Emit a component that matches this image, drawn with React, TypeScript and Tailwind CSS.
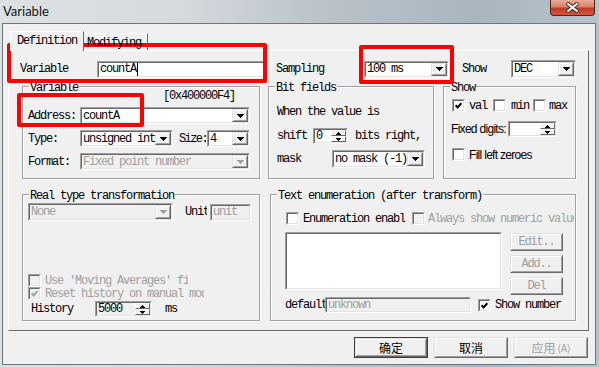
import React from "react";

type P = { className?: string; inner?: string; children?: React.ReactNode };

const mono = "font-['Liberation_Mono',monospace] text-[12px] leading-[12px] tracking-[-1.2px]";
const sans = "font-['Liberation_Sans',sans-serif] text-[12px] tracking-[-0.7px]";
const cjk = "font-['Noto_Sans_CJK_SC',sans-serif] text-[12px] tracking-normal";

function Sunken({ className = "", inner = "", children }: P) {
  return (
    <div className={`border border-t-[#a0a0a0] border-l-[#a0a0a0] border-r-white border-b-white ${className}`}>
      <div className={`h-full w-full border border-t-[#696969] border-l-[#696969] border-r-[#e3e3e3] border-b-[#e3e3e3] ${inner}`}>
        {children}
      </div>
    </div>
  );
}

function Raised({ className = "", inner = "", children }: P) {
  return (
    <div className={`border border-t-[#e3e3e3] border-l-[#e3e3e3] border-r-[#696969] border-b-[#696969] ${className}`}>
      <div className={`h-full w-full flex items-center justify-center border border-t-white border-l-white border-r-[#a0a0a0] border-b-[#a0a0a0] bg-[#f0f0f0] ${inner}`}>
        {children}
      </div>
    </div>
  );
}

function Arrow({ color = "#000" }: { color?: string }) {
  return (
    <svg width="7" height="4" viewBox="0 0 7 4" shapeRendering="crispEdges" className="block">
      <path d="M0 0h7v1H6v1H5v1H4v1H3V3H2V2H1V1H0z" fill={color} />
    </svg>
  );
}

function Tri({ up }: { up?: boolean }) {
  return (
    <svg width="5" height="3" viewBox="0 0 5 3" shapeRendering="crispEdges" className="block">
      <path d={up ? "M2 0h1v1h1v1h1v1H0V2h1V1h1z" : "M0 0h5v1H4v1H3v1H2V2H1V1H0z"} fill="#000" />
    </svg>
  );
}

function Combo({ w, h = "h-[18px]", text, disabled }: { w: string; h?: string; text: string; disabled?: boolean }) {
  return (
    <Sunken className={`${w} ${h} shrink-0`} inner={`flex ${disabled ? "bg-[#f0f0f0]" : "bg-white"}`}>
      <span className={`flex-1 min-w-0 self-center overflow-hidden whitespace-nowrap pl-[1px] ${disabled ? "text-[#a0a0a0]" : "text-black"}`}>
        {text}
      </span>
      <Raised className="w-[16px] h-full shrink-0">
        <Arrow color={disabled ? "#a0a0a0" : "#000"} />
      </Raised>
    </Sunken>
  );
}

function Spin({ w, text = "", grey }: { w: string; text?: string; grey?: boolean }) {
  return (
    <Sunken className={`${w} h-[16px] shrink-0`} inner={`flex ${grey ? "bg-[#f0f0f0]" : "bg-white"}`}>
      <span className="flex-1 min-w-0 self-center overflow-hidden whitespace-nowrap pl-[1px]">{text}</span>
      <div className="w-[15px] h-full flex flex-col shrink-0">
        <div className="flex-1 flex items-center justify-center border border-t-white border-l-white border-r-[#696969] border-b-[#696969] bg-[#f0f0f0]">
          <Tri up />
        </div>
        <div className="flex-1 flex items-center justify-center border border-t-white border-l-white border-r-[#696969] border-b-[#696969] bg-[#f0f0f0]">
          <Tri />
        </div>
      </div>
    </Sunken>
  );
}

function Check({ checked, disabled }: { checked?: boolean; disabled?: boolean }) {
  return (
    <Sunken
      className="w-[13px] h-[13px] shrink-0"
      inner={`flex items-center justify-center ${disabled ? "bg-[#f0f0f0]" : "bg-white"}`}
    >
      {checked && (
        <svg width="7" height="7" viewBox="0 0 7 7" className="block">
          <polyline points="0.6,3.2 2.6,5.4 6.4,1.2" fill="none" stroke={disabled ? "#a0a0a0" : "#000"} strokeWidth="2" />
        </svg>
      )}
    </Sunken>
  );
}

function Group({ title, className = "", children }: { title: string; className?: string; children?: React.ReactNode }) {
  return (
    <fieldset
      className={`min-w-0 shrink-0 border border-[#a0a0a0] shadow-[inset_1px_1px_0_#fff,1px_1px_0_#fff] ${className}`}
    >
      <legend className="ml-[6px] px-[1px] leading-[10px] bg-[#f0f0f0]">
        <span className="relative top-[2px]">{title}</span>
      </legend>
      {children}
    </fieldset>
  );
}

function Btn({ children, disabled, def }: { children: React.ReactNode; disabled?: boolean; def?: boolean }) {
  return (
    <div className={`w-[74px] h-[21px] ${def ? "border border-[#3c3c3c]" : ""}`}>
      <Raised className="w-full h-full" inner={`${cjk} ${disabled ? "text-[#a0a0a0]" : "text-black"}`}>
        {children}
      </Raised>
    </div>
  );
}

function SmallBtn({ children }: { children: React.ReactNode }) {
  return (
    <Raised className="w-[53px] h-[18px]" inner="text-[#a0a0a0]">
      {children}
    </Raised>
  );
}

export default function App() {
  return (
    <div
      className={`relative w-[599px] h-[367px] overflow-hidden flex flex-col bg-[linear-gradient(90deg,#dde1e4_0%,#d5dade_30%,#b9c2c9_55%,#a9b5be_80%,#b6c4cc_100%)] ${mono}`}
    >
      {/* title bar */}
      <div className="h-[23px] shrink-0 flex items-start">
        <span className="ml-[3px] mt-[3px] font-['Lato',sans-serif] text-[13px] leading-[16px] tracking-normal text-[#141414]">
          Variable
        </span>
        <div className="ml-auto mr-[4px] w-[45px] h-[16px] rounded-b-[4px] border border-t-0 border-[#5a2016] bg-[linear-gradient(180deg,#e8aa9b_0%,#d9826c_45%,#c33a22_55%,#d4573d_100%)] flex items-center justify-center">
          <svg width="13" height="11" viewBox="0 0 13 11" className="block">
            <path d="M1 1L12 10M12 1L1 10" stroke="#3d2a28" strokeWidth="4" />
            <path d="M1.5 1.5L11.5 9.5M11.5 1.5L1.5 9.5" stroke="#fff" strokeWidth="2.2" />
          </svg>
        </div>
      </div>

      <div className="flex flex-1">
        <div className="w-[2px] shrink-0" />
        {/* client area */}
        <div className="w-[594px] shrink-0 border border-[#6e767c] bg-[#f0f0f0] flex flex-col">
          {/* tabs */}
          <div className="relative z-10 mt-[7px] ml-[7px] h-[20px] -mb-[1px] flex items-end">
            <div className="w-[74px] h-[20px] pl-[6px] pt-[3px] bg-[#f0f0f0] border-l border-t border-r border-l-white border-t-white border-r-[#696969]">
              Definition
            </div>
            <div className="w-[64px] h-[17px] mb-[1px] pl-[3px] pt-[3px] border-t border-r border-t-white border-r-[#696969]">
              Modifying
            </div>
          </div>

          {/* tab page */}
          <div className="ml-[5px] w-[581px] h-[281px] border border-t-white border-l-white border-r-[#696969] border-b-[#696969] flex flex-col">
            {/* row 1 */}
            <div className="mt-[9px] pl-[11px] h-[18px] flex items-center">
              <span className="w-[77px] shrink-0">Variable</span>
              <Sunken className="w-[168px] h-[17px] shrink-0" inner="bg-white flex items-center">
                <span className="pl-[1px]">countA</span>
                <span className="ml-[1px] w-px h-[13px] bg-black" />
              </Sunken>
              <span className="ml-[11px] w-[88px] shrink-0">Sampling</span>
              <Combo w="w-[85px]" h="h-[17px]" text="100 ms" />
              <span className="ml-[13px] w-[49px] shrink-0">Show</span>
              <Combo w="w-[65px]" text="DEC" />
            </div>

            {/* row 2 */}
            <div className="mt-[3px] pl-[13px] flex">
              <Group title="Variable" className="w-[238px] h-[98px]">
                <div className="pl-[140px] leading-[10px] h-[10px]">[0x400000F4]</div>
                <div className="mt-[6px] pl-[5px] flex items-center">
                  <span className="w-[52px] shrink-0">Address:</span>
                  <Combo w="w-[170px]" h="h-[17px]" text="countA" />
                </div>
                <div className="mt-[6px] pl-[5px] flex items-center">
                  <span className="w-[52px] shrink-0">Type:</span>
                  <Combo w="w-[93px]" h="h-[17px]" text="unsigned int" />
                  <span className="ml-[6px] w-[28px] shrink-0 whitespace-nowrap tracking-[-1.6px]">Size:</span>
                  <Combo w="w-[43px]" h="h-[17px]" text="4" />
                </div>
                <div className="mt-[6px] pl-[5px] flex items-center">
                  <span className="w-[52px] shrink-0">Format:</span>
                  <Combo w="w-[170px]" h="h-[17px]" text="Fixed point number" disabled />
                </div>
              </Group>

              <Group title="Bit fields" className="ml-[8px] w-[166px] h-[98px]">
                <div className="mt-[15px] pl-[8px]">When the value is</div>
                <div className="mt-[10px] pl-[8px] flex items-center">
                  <span className="w-[36px] shrink-0">shift</span>
                  <Spin w="w-[35px]" text="0" />
                  <span className="ml-[7px] whitespace-nowrap">bits right,</span>
                </div>
                <div className="mt-[6px] pl-[8px] flex items-center">
                  <span className="w-[55px] shrink-0">mask</span>
                  <Combo w="w-[93px]" text="no mask (-1)" />
                </div>
              </Group>

              <Group title="Show" className="ml-[9px] w-[133px] h-[98px]">
                <div className="mt-[8px] pl-[8px] flex items-center">
                  <Check checked />
                  <span className="ml-[4px]">val</span>
                  <span className="ml-[6px]">
                    <Check />
                  </span>
                  <span className="ml-[5px]">min</span>
                  <span className="ml-[4px]">
                    <Check />
                  </span>
                  <span className="ml-[3px]">max</span>
                </div>
                <div className="mt-[9px] pl-[7px] flex items-center">
                  <span className={`w-[57px] shrink-0 whitespace-nowrap ${sans}`}>Fixed digits:</span>
                  <Spin w="w-[49px]" />
                </div>
                <div className="mt-[11px] pl-[8px] flex items-center">
                  <Check />
                  <span className={`ml-[4px] whitespace-nowrap ${sans}`}>Fill left zeroes</span>
                </div>
              </Group>
            </div>

            {/* row 3 */}
            <div className="mt-[10px] pl-[13px] flex">
              <Group title="Real type transformation" className="w-[238px] h-[132px]">
                <div className="mt-[4px] pl-[5px] flex items-center">
                  <Combo w="w-[145px]" text="None" disabled />
                  <span className="ml-[12px] w-[22px] shrink-0 overflow-hidden whitespace-nowrap">Unit</span>
                  <Sunken className="ml-[3px] w-[41px] h-[17px] shrink-0" inner="bg-[#f0f0f0] flex items-center">
                    <span className="pl-[1px] text-[#a0a0a0]">unit</span>
                  </Sunken>
                </div>
                <div className="mt-[53px] pl-[5px] flex items-center">
                  <Check disabled />
                  <span className="ml-[4px] w-[143px] overflow-hidden whitespace-nowrap text-[#a0a0a0]">
                    Use 'Moving Averages' filter
                  </span>
                </div>
                <div className="pl-[5px] flex items-center">
                  <Check checked disabled />
                  <span className="ml-[4px] w-[159px] overflow-hidden whitespace-nowrap text-[#a0a0a0]">
                    Reset history on manual mode
                  </span>
                </div>
                <div className="mt-[1px] pl-[8px] flex items-center">
                  <span className="w-[64px] shrink-0">History</span>
                  <Spin w="w-[57px]" text="5000" grey />
                  <span className="ml-[13px]">ms</span>
                </div>
              </Group>

              <Group title="Text enumeration (after transform)" className="ml-[10px] w-[306px] h-[132px]">
                <div className="mt-[13px] pl-[15px] flex items-center">
                  <Check />
                  <span className="ml-[4px] w-[102px] shrink-0 overflow-hidden whitespace-nowrap">Enumeration enable</span>
                  <span className="ml-[7px]">
                    <Check disabled />
                  </span>
                  <span className="ml-[3px] w-[146px] overflow-hidden whitespace-nowrap text-[#a0a0a0]">
                    Always show numeric value
                  </span>
                </div>
                <div className="mt-[7px] pl-[14px] flex items-start">
                  <Sunken className="w-[217px] h-[58px] shrink-0" inner="bg-white" />
                  <div className="ml-[8px] mt-[1px] flex flex-col gap-[4px]">
                    <SmallBtn>Edit..</SmallBtn>
                    <SmallBtn>Add..</SmallBtn>
                    <SmallBtn>Del</SmallBtn>
                  </div>
                </div>
                <div className="mt-[2px] pl-[14px] flex items-center">
                  <span className="w-[40px] shrink-0 overflow-hidden whitespace-nowrap">default</span>
                  <Sunken className="w-[146px] h-[16px] shrink-0" inner="bg-[#f0f0f0] flex items-center">
                    <span className="pl-[1px] text-[#a0a0a0]">unknown</span>
                  </Sunken>
                  <span className="ml-[7px]">
                    <Check checked />
                  </span>
                  <span className="ml-[4px] whitespace-nowrap">Show number</span>
                </div>
              </Group>
            </div>
          </div>

          {/* dialog buttons */}
          <div className="mt-[6px] pr-[7px] flex justify-end gap-[6px]">
            <Btn def>确定</Btn>
            <Btn>取消</Btn>
            <Btn disabled>
              应用<span className="text-[10px] ml-[2px]">(A)</span>
            </Btn>
          </div>
        </div>
        <div className="w-[3px] shrink-0" />
      </div>
      <div className="h-[2px] shrink-0" />

      {/* red annotation boxes */}
      <div className="absolute left-[7px] top-[43px] w-[260px] h-[40px] border-[4px] border-[#ff0000] rounded-[2px]" />
      <div className="absolute left-[359px] top-[45px] w-[95px] h-[39px] border-[4px] border-[#ff0000] rounded-[2px]" />
      <div className="absolute left-[17px] top-[93px] w-[127px] h-[34px] border-[4px] border-[#ff0000] rounded-[2px]" />
    </div>
  );
}
